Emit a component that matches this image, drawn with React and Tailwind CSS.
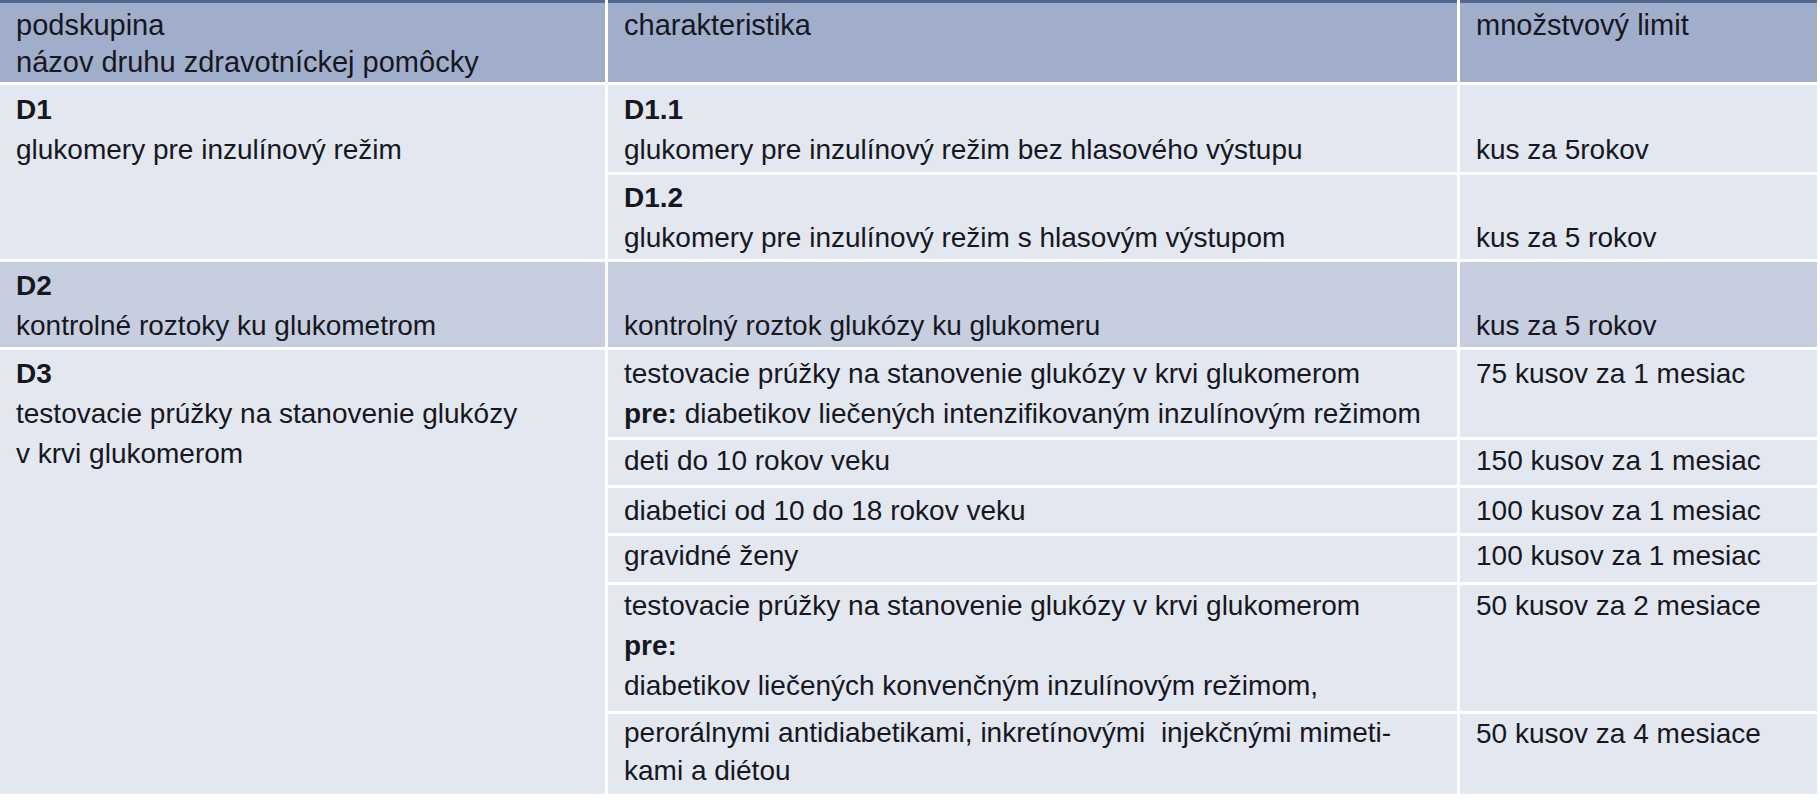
import React from "react";

const rowPad = {
  d11: "pt-[5px]",
  d12: "pt-[3px]",
  d2: "pt-[4px]",
  a: "pt-[4px]",
  b: "pt-[1px]",
  c: "pt-[3px]",
  d: "pt-0",
  e: "pt-[1px]",
  f: "pt-0",
};

function Cell({ className = "", children, tone = "light" }) {
  const bg = tone === "mid" ? "bg-[#c6cee0]" : "bg-[#e2e7f0]";
  return <div className={`${bg} pl-4 pr-2 whitespace-nowrap ${className}`}>{children}</div>;
}

function Line({ children }) {
  return <div className="h-[40px]">{children}</div>;
}

function Head({ children }) {
  return (
    <div className="bg-[#a0aecb] border-t-[3px] border-[#53688f] pl-4 pt-[4px] text-[29px] leading-[37px]">
      {children}
    </div>
  );
}

export default function App() {
  return (
    <div className="w-[1820px] h-[800px] bg-white overflow-hidden font-['Liberation_Sans',Arial,sans-serif] text-[28px] leading-[40px] text-[#17171f]">
      <div className="grid grid-cols-[605px_849px_357px] grid-rows-[82px_87px_84px_85px_87px_45px_45px_46px_126px_80px] gap-[3px]">
        {/* header */}
        <Head>
          <div>podskupina</div>
          <div>názov druhu zdravotníckej pomôcky</div>
        </Head>
        <Head>charakteristika</Head>
        <Head>množstvový limit</Head>

        {/* D1 */}
        <Cell className={`row-span-2 ${rowPad.d11}`}>
          <Line><b>D1</b></Line>
          <Line>glukomery pre inzulínový režim</Line>
        </Cell>
        <Cell className={rowPad.d11}>
          <Line><b>D1.1</b></Line>
          <Line>glukomery pre inzulínový režim bez hlasového výstupu</Line>
        </Cell>
        <Cell className={rowPad.d11}>
          <Line />
          <Line>kus za 5rokov</Line>
        </Cell>
        <Cell className={rowPad.d12}>
          <Line><b>D1.2</b></Line>
          <Line>glukomery pre inzulínový režim s hlasovým výstupom</Line>
        </Cell>
        <Cell className={rowPad.d12}>
          <Line />
          <Line>kus za 5 rokov</Line>
        </Cell>

        {/* D2 */}
        <Cell tone="mid" className={rowPad.d2}>
          <Line><b>D2</b></Line>
          <Line>kontrolné roztoky ku glukometrom</Line>
        </Cell>
        <Cell tone="mid" className={rowPad.d2}>
          <Line />
          <Line>kontrolný roztok glukózy ku glukomeru</Line>
        </Cell>
        <Cell tone="mid" className={rowPad.d2}>
          <Line />
          <Line>kus za 5 rokov</Line>
        </Cell>

        {/* D3 */}
        <Cell className={`row-span-6 ${rowPad.a}`}>
          <Line><b>D3</b></Line>
          <Line>testovacie prúžky na stanovenie glukózy</Line>
          <Line>v krvi glukomerom</Line>
        </Cell>
        <Cell className={rowPad.a}>
          <Line>testovacie prúžky na stanovenie glukózy v krvi glukomerom</Line>
          <Line><b>pre:</b> diabetikov liečených intenzifikovaným inzulínovým režimom</Line>
        </Cell>
        <Cell className={rowPad.a}>
          <Line>75 kusov za 1 mesiac</Line>
        </Cell>

        <Cell className={rowPad.b}>
          <Line>deti do 10 rokov veku</Line>
        </Cell>
        <Cell className={rowPad.b}>
          <Line>150 kusov za 1 mesiac</Line>
        </Cell>

        <Cell className={rowPad.c}>
          <Line>diabetici od 10 do 18 rokov veku</Line>
        </Cell>
        <Cell className={rowPad.c}>
          <Line>100 kusov za 1 mesiac</Line>
        </Cell>

        <Cell className={rowPad.d}>
          <Line>gravidné ženy</Line>
        </Cell>
        <Cell className={rowPad.d}>
          <Line>100 kusov za 1 mesiac</Line>
        </Cell>

        <Cell className={rowPad.e}>
          <Line>testovacie prúžky na stanovenie glukózy v krvi glukomerom</Line>
          <Line><b>pre:</b></Line>
          <Line>diabetikov liečených konvenčným inzulínovým režimom,</Line>
        </Cell>
        <Cell className={rowPad.e}>
          <Line>50 kusov za 2 mesiace</Line>
        </Cell>

        <Cell className={`${rowPad.f} leading-[38px]`}>
          <div className="h-[38px]">perorálnymi antidiabetikami, inkretínovými{"\u00a0 "}injekčnými mimeti-</div>
          <div className="h-[38px]">kami a diétou</div>
        </Cell>
        <Cell className={rowPad.f}>
          <Line>50 kusov za 4 mesiace</Line>
        </Cell>
      </div>
    </div>
  );
}
